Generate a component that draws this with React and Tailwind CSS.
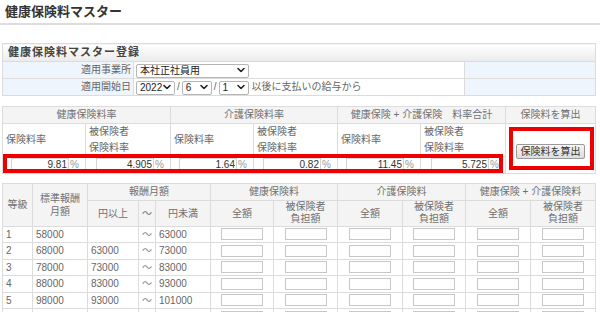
import React from 'react';

const rates = ['9.81', '4.905', '1.64', '0.82', '11.45', '5.725'];

const grades = [
  { g: '1', std: '58000', lo: '', hi: '63000' },
  { g: '2', std: '68000', lo: '63000', hi: '73000' },
  { g: '3', std: '78000', lo: '73000', hi: '83000' },
  { g: '4', std: '88000', lo: '83000', hi: '93000' },
  { g: '5', std: '98000', lo: '93000', hi: '101000' },
  { g: '', std: '', lo: '', hi: '', tilde: '' },
];

const Chevron = () => (
  <svg className="pointer-events-none absolute right-[4px] top-1/2 h-[5px] w-[8px] -translate-y-1/2" viewBox="0 0 8 5" fill="none">
    <path d="M1 1l3 3 3-3" stroke="#222" strokeWidth="1.6" strokeLinecap="round" strokeLinejoin="round" />
  </svg>
);

const Select = ({ value, width }) => (
  <span className={`relative inline-block h-[14px] align-middle ${width}`}>
    <select
      defaultValue={value}
      className="h-full w-full appearance-none rounded-[2px] border border-[#b5b5b5] bg-white pl-[3px] text-[10px] leading-[12px] text-[#222]"
    >
      <option>{value}</option>
    </select>
    <Chevron />
  </span>
);

const th = 'border border-[#dcdcdc] bg-[#f4f4f4] font-normal text-[#707070]';
const td = 'border border-[#dcdcdc] text-[#666]';

const App = () => {
  return (
    <div
      className="h-[312px] w-[600px] overflow-hidden bg-white text-[10px]"
      style={{ fontFamily: '"Liberation Sans", "Noto Sans CJK JP", sans-serif' }}
    >
      <div className="h-[25px] border-b-2 border-[#dddddd] pl-[5px] pt-[4px] text-[13px] font-bold leading-[16px] text-[#333]">
        健康保険料マスター
      </div>

      <div className="pl-[2px]">
        {/* 登録 */}
        <table className="mt-[18px] w-[593px] table-fixed border-collapse">
          <colgroup>
            <col className="w-[131px]" />
            <col className="w-[331px]" />
            <col className="w-[131px]" />
          </colgroup>
          <tbody>
            <tr className="h-[17px]">
              <td colSpan={3} className="border border-[#dcdcdc] bg-gradient-to-b from-white to-[#ebebeb] pl-[5px] text-[11px] font-bold tracking-[1px] text-[#444]">
                健康保険料マスター登録
              </td>
            </tr>
            <tr className="h-[17px]">
              <td className="border border-[#dcdcdc] bg-[#eef5fd] pr-[2px] text-right text-[#666]">適用事業所</td>
              <td className="border border-[#dcdcdc] pl-[2px]">
                <Select value="本社正社員用" width="w-[113px]" />
              </td>
              <td className="border border-[#dcdcdc] bg-[#eef5fd]" />
            </tr>
            <tr className="h-[17px]">
              <td className="border border-[#dcdcdc] bg-[#eef5fd] pr-[2px] text-right text-[#666]">適用開始日</td>
              <td className="border border-[#dcdcdc] pl-[2px] text-[#666]">
                <div className="flex items-center">
                  <Select value="2022" width="w-[39px]" />
                  <span className="px-[2px]">/</span>
                  <Select value="6" width="w-[30px]" />
                  <span className="px-[2px]">/</span>
                  <Select value="1" width="w-[30px]" />
                  <span className="pl-[3px]">以後に支払いの給与から</span>
                </div>
              </td>
              <td className="border border-[#dcdcdc] bg-[#eef5fd]" />
            </tr>
          </tbody>
        </table>

        {/* 料率 */}
        <div className="relative mt-[10px] w-[593px]">
          <table className="w-[593px] table-fixed border-collapse">
            <colgroup>
              <col className="w-[83px]" />
              <col className="w-[85px]" />
              <col className="w-[83px]" />
              <col className="w-[84px]" />
              <col className="w-[83px]" />
              <col className="w-[85px]" />
              <col className="w-[90px]" />
            </colgroup>
            <tbody>
              <tr className="h-[17px]">
                <th colSpan={2} className={th}>健康保険料率</th>
                <th colSpan={2} className={th}>介護保険料率</th>
                <th colSpan={2} className={th}>健康保険 + 介護保険　料率合計</th>
                <th className={th}>保険料を算出</th>
              </tr>
              <tr className="h-[31px]">
                {[0, 1, 2].map((i) => (
                  <React.Fragment key={i}>
                    <td className={`${td} pl-[3px]`}>保険料率</td>
                    <td className={`${td} pl-[3px] leading-[16px]`}>
                      被保険者
                      <br />
                      保険料率
                    </td>
                  </React.Fragment>
                ))}
                <td rowSpan={2} className={`${td} text-center`}>
                  <button className="mt-[6px] h-[15px] w-[69px] rounded-[2px] border border-[#9a9a9a] bg-gradient-to-b from-[#f7f7f7] to-[#dcdcdc] text-[10px] leading-[13px] text-[#333]">
                    保険料を算出
                  </button>
                </td>
              </tr>
              <tr className="h-[17px]">
                {rates.map((r, i) => (
                  <td key={i} className={td}>
                    <div className="flex items-center justify-end pr-[7px]">
                      <input
                        readOnly
                        value={r}
                        className="h-[13px] w-[58px] border border-[#d4d4d4] bg-white pr-[1px] text-right text-[10px] leading-[11px] text-[#333]"
                      />
                      <span className="w-[9px] pl-[1px] text-[#999]">%</span>
                    </div>
                  </td>
                ))}
              </tr>
            </tbody>
          </table>
          <div className="pointer-events-none absolute left-[1px] top-[48px] h-[19px] w-[500px] border-4 border-[#ee0000]" />
          <div className="pointer-events-none absolute left-[507px] top-[21px] h-[43px] w-[85px] border-4 border-[#ee0000]" />
        </div>

        {/* 等級表 */}
        <table className="mt-[9px] w-[593px] table-fixed border-collapse text-center">
          <colgroup>
            <col className="w-[30px]" />
            <col className="w-[55px]" />
            <col className="w-[51px]" />
            <col className="w-[17px]" />
            <col className="w-[55px]" />
            <col className="w-[63px]" />
            <col className="w-[64px]" />
            <col className="w-[65px]" />
            <col className="w-[63px]" />
            <col className="w-[65px]" />
            <col className="w-[65px]" />
          </colgroup>
          <thead>
            <tr className="h-[17px]">
              <th rowSpan={2} className={th}>等級</th>
              <th rowSpan={2} className={`${th} leading-[13px]`}>
                標準報酬
                <br />
                月額
              </th>
              <th colSpan={3} className={th}>報酬月額</th>
              <th colSpan={2} className={th}>健康保険料</th>
              <th colSpan={2} className={th}>介護保険料</th>
              <th colSpan={2} className={th}>健康保険 + 介護保険料</th>
            </tr>
            <tr className="h-[26px]">
              <th className={th}>円以上</th>
              <th className={th}>～</th>
              <th className={th}>円未満</th>
              {[0, 1, 2].map((i) => (
                <React.Fragment key={i}>
                  <th className={th}>全額</th>
                  <th className={`${th} leading-[12px]`}>
                    被保険者
                    <br />
                    負担額
                  </th>
                </React.Fragment>
              ))}
            </tr>
          </thead>
          <tbody>
            {grades.map((row, idx) => (
              <tr key={idx} className="h-[16.5px]">
                <td className={`${td} pl-[3px] text-left`}>{row.g}</td>
                <td className={`${td} pl-[3px] text-left`}>{row.std}</td>
                <td className={`${td} pl-[3px] text-left`}>{row.lo}</td>
                <td className={`${td} text-[#888]`}>{row.tilde ?? '～'}</td>
                <td className={`${td} pl-[3px] text-left`}>{row.hi}</td>
                {[0, 1, 2, 3, 4, 5].map((i) => (
                  <td key={i} className={td}>
                    <input readOnly className="mx-auto block h-[12px] w-[42px] border border-[#c8c8c8] bg-white" />
                  </td>
                ))}
              </tr>
            ))}
          </tbody>
        </table>
      </div>
    </div>
  );
};

export default App;
